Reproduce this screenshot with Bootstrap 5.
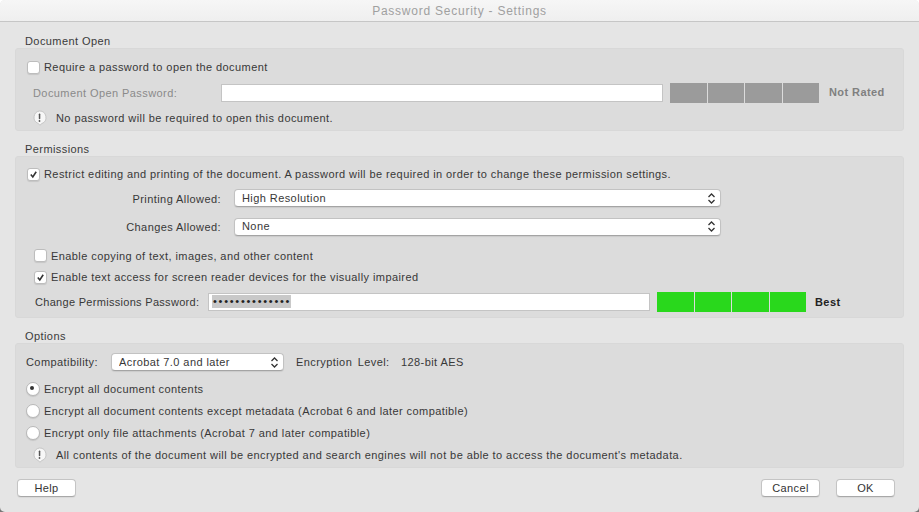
<!DOCTYPE html>
<html lang="en">
<head>
<meta charset="utf-8">
<title>Password Security - Settings</title>
<link href="https://cdn.jsdelivr.net/npm/bootstrap@5.3.0/dist/css/bootstrap.min.css" rel="stylesheet">
<style>
html,body{height:512px;overflow:hidden}
body{background:linear-gradient(#fff 0 50%,#777 50%);font-family:"Liberation Sans",Arial,sans-serif;font-size:11px;letter-spacing:.42px;color:#383838;line-height:14px}
.win{width:919px;height:512px;background:#e5e5e5;border-radius:5px;overflow:hidden}
.titlebar{height:22px;background:linear-gradient(#f6f6f6,#efefef);border-bottom:1px solid #c6c6c6;color:#a0a0a0;font-size:12px;letter-spacing:.76px}
.body-wrap{padding:0 15px}
.sec-label{height:25px;padding:0 0 0 10px;color:#3a3a3a}
.sec-first{height:26px}
.group-box{background:#dcdcdc;border:1px solid #d8d8d8;border-radius:3px;padding-top:5px}
.rh-4{height:4px}.rh-16{height:16px}.rh-18{height:18px}.rh-24{height:24px}.rh-25{height:25px}.rh-26{height:26px}.rh-28{height:28px}.rh-31{height:31px}.rh-33{height:33px}
.ind-11{padding-left:11px}.ind-17{padding-left:17px}.ind-16{padding-left:16px}.ind-18{padding-left:18px}.ind-19{padding-left:19px}.ind-10{padding-left:10px}
.form-check-input.mac-check{width:13px;height:13px;margin:0 4px 0 0;flex:none;background-color:#fff;border:1px solid #bdbdbd;border-radius:3px;box-shadow:0 1px 1px rgba(0,0,0,.1)}
.form-check-input.mac-check:checked{background-color:#fff;border-color:#bdbdbd;background-size:11px 11px;background-image:url("data:image/svg+xml,%3Csvg xmlns='http://www.w3.org/2000/svg' viewBox='0 0 11 11'%3E%3Cpath d='M2.800 5.600l2 2.400 3.400-5.200' fill='none' stroke='%23333' stroke-width='1.600'/%3E%3C/svg%3E")}
.form-check-input.mac-radio{width:14px;height:14px;margin:0 4px 0 0;flex:none;background-color:#fff;border:1px solid #b8b8b8;border-radius:50%;box-shadow:0 1px 1px rgba(0,0,0,.1)}
.form-check-input.mac-radio:checked{background-color:#fff;border-color:#b8b8b8;background-size:14px 14px;background-image:url("data:image/svg+xml,%3Csvg xmlns='http://www.w3.org/2000/svg' viewBox='0 0 14 14'%3E%3Ccircle cx='6' cy='6' r='2' fill='%23333'/%3E%3C/svg%3E")}
.form-select.mac-select{height:18px;padding:0 20px 1px 7px;font-size:11px;letter-spacing:.42px;line-height:14px;color:#383838;border:1px solid #c2c2c2;border-bottom-color:#a4a4a4;border-radius:4px;box-shadow:0 1px 1px rgba(0,0,0,.08);background-size:9px 13px;background-position:right 4px center;background-image:url("data:image/svg+xml,%3Csvg xmlns='http://www.w3.org/2000/svg' viewBox='0 0 9 13'%3E%3Cpath d='M1.500 5L4.500 2l3 3M1.500 8l3 3 3-3' fill='none' stroke='%23333' stroke-width='1.300'/%3E%3C/svg%3E")}
.sel-wide{width:487px}.sel-compat{width:173px}
.lab-right{width:205px;text-align:right;margin-right:13px;padding-top:1px;flex:none}
.lab-open{width:188px;color:#8a8a8a;flex:none}
.lab-perm{width:173px;flex:none;letter-spacing:.3px}
.field-box{width:442px;height:18px;border:1px solid #c4c4c4;background:#fff;padding:0 0 0 3px;flex:none}
.sel-dots{background:#c9c9c9;letter-spacing:1.73px;color:#222;height:13px;line-height:13px;padding:0 0 0 1px}
.strength{width:149px;height:20px;margin-left:7px;gap:1px;flex:none}
.seg{flex:1;background:#9b9b9b}
.seg-on{background:#29d81c}
.rate-off{font-weight:700;color:#808080;margin-left:10px;margin-top:-1px}
.rate-on{font-weight:700;color:#222;margin-left:9px}
.warn-ico{width:15px;height:16px;margin-right:9px;flex:none}
.lab-compat{width:85px;flex:none}
.enc-a{margin-left:12px;width:105px;word-spacing:2px;flex:none}
.ftr{padding:11px 24px 0 17px}
.btn.mac-btn{width:59px;height:18px;padding:0;font-size:11px;letter-spacing:.4px;line-height:15px;color:#333;background:#fff;border:1px solid #c4c4c4;border-bottom-color:#a8a8a8;border-radius:4px;box-shadow:0 1px 1px rgba(0,0,0,.06)}
</style>
</head>
<body>
<div class="win">
  <div class="titlebar d-flex align-items-center justify-content-center">Password Security - Settings</div>
  <div class="body-wrap">
    <div class="sec-label sec-first d-flex align-items-end">Document Open</div>
    <div class="group-box">
      <label class="rh-26 d-flex align-items-center ind-11"><input class="form-check-input mac-check" type="checkbox">Require a password to open the document</label>
      <div class="rh-25 d-flex align-items-center ind-17">
        <span class="lab-open">Document Open Password:</span>
        <div class="field-box"></div>
        <div class="strength d-flex"><div class="seg"></div><div class="seg"></div><div class="seg"></div><div class="seg"></div></div>
        <span class="rate-off">Not Rated</span>
      </div>
      <div class="rh-25 d-flex align-items-center ind-16">
        <svg class="warn-ico" viewBox="0 0 15 16"><path d="M7.500 1a6.500 6.500 0 0 1 2.200 12.600L8 15.200 6 13.400A6.500 6.500 0 0 1 7.500 1z" fill="#f7f7f7" stroke="#bdbdbd" stroke-width=".8"/><rect x="6.800" y="3.600" width="1.500" height="5.600" rx=".7" fill="#555"/><circle cx="7.500" cy="11" r=".9" fill="#555"/></svg>
        No password will be required to open this document.
      </div>
    </div>

    <div class="sec-label d-flex align-items-end">Permissions</div>
    <div class="group-box">
      <label class="rh-24 d-flex align-items-center ind-11"><input class="form-check-input mac-check" type="checkbox" checked>Restrict editing and printing of the document. A password will be required in order to change these permission settings.</label>
      <div class="rh-24 d-flex align-items-center"><span class="lab-right">Printing Allowed:</span><select class="form-select mac-select sel-wide"><option>High Resolution</option></select></div>
      <div class="rh-33 d-flex align-items-center"><span class="lab-right">Changes Allowed:</span><select class="form-select mac-select sel-wide"><option>None</option></select></div>
      <label class="rh-25 d-flex align-items-center ind-18"><input class="form-check-input mac-check" type="checkbox">Enable copying of text, images, and other content</label>
      <label class="rh-18 d-flex align-items-center ind-18"><input class="form-check-input mac-check" type="checkbox" checked>Enable text access for screen reader devices for the visually impaired</label>
      <div class="rh-31 d-flex align-items-center ind-19">
        <span class="lab-perm">Change Permissions Password:</span>
        <div class="field-box d-flex align-items-center"><span class="sel-dots">••••••••••••••</span></div>
        <div class="strength d-flex"><div class="seg seg-on"></div><div class="seg seg-on"></div><div class="seg seg-on"></div><div class="seg seg-on"></div></div>
        <span class="rate-on">Best</span>
      </div>
    </div>

    <div class="sec-label d-flex align-items-end">Options</div>
    <div class="group-box">
      <div class="rh-26 d-flex align-items-center ind-10">
        <span class="lab-compat">Compatibility:</span>
        <select class="form-select mac-select sel-compat"><option>Acrobat 7.0 and later</option></select>
        <span class="enc-a">Encryption Level:</span>
        <span>128-bit AES</span>
      </div>
      <label class="rh-28 d-flex align-items-center ind-10"><input class="form-check-input mac-radio" type="radio" name="enc" checked>Encrypt all document contents</label>
      <label class="rh-16 d-flex align-items-center ind-10"><input class="form-check-input mac-radio" type="radio" name="enc">Encrypt all document contents except metadata (Acrobat 6 and later compatible)</label>
      <label class="rh-28 d-flex align-items-center ind-10"><input class="form-check-input mac-radio" type="radio" name="enc">Encrypt only file attachments (Acrobat 7 and later compatible)</label>
      <div class="rh-16 d-flex align-items-center ind-16">
        <svg class="warn-ico" viewBox="0 0 15 16"><path d="M7.500 1a6.500 6.500 0 0 1 2.200 12.600L8 15.200 6 13.400A6.500 6.500 0 0 1 7.500 1z" fill="#f7f7f7" stroke="#bdbdbd" stroke-width=".8"/><rect x="6.800" y="3.600" width="1.500" height="5.600" rx=".7" fill="#555"/><circle cx="7.500" cy="11" r=".9" fill="#555"/></svg>
        All contents of the document will be encrypted and search engines will not be able to access the document's metadata.
      </div>
      <div class="rh-4"></div>
    </div>
  </div>
  <div class="ftr d-flex justify-content-between">
    <button type="button" class="btn mac-btn">Help</button>
    <div class="d-flex gap-3">
      <button type="button" class="btn mac-btn">Cancel</button>
      <button type="button" class="btn mac-btn">OK</button>
    </div>
  </div>
</div>
<script src="https://cdn.jsdelivr.net/npm/bootstrap@5.3.0/dist/js/bootstrap.bundle.min.js"></script>
</body>
</html>
